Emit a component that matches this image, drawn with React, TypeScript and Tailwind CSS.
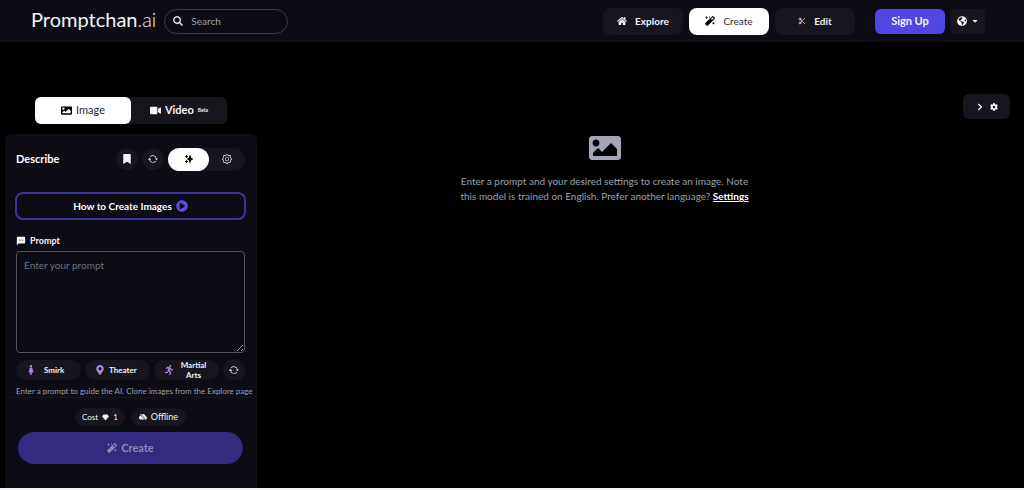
import { useState } from 'react';
import {
  FaHome,
  FaMagic,
  FaSearch,
  FaImage,
  FaVideo,
  FaBookmark,
  FaPlayCircle,
  FaMapMarkerAlt,
  FaRunning,
  FaFemale,
  FaGlobeAmericas,
  FaCaretDown,
  FaChevronRight,
  FaCog,
} from 'react-icons/fa';
import { BsGear, BsArrowRepeat, BsCloudSlashFill } from 'react-icons/bs';
import { FiScissors } from 'react-icons/fi';
import { HiSparkles } from 'react-icons/hi';
import { MdSms } from 'react-icons/md';

const navItem = 'flex h-[27px] w-20 items-center justify-center gap-2 rounded-lg text-[10px]';
const chip = 'flex h-5 w-[65px] items-center rounded-full bg-[#17161f] text-[8px] leading-[10px] font-bold text-gray-100';

function Gem() {
  return (
    <svg viewBox="0 0 14 14" className="size-[7px]" fill="currentColor" aria-hidden="true">
      <path d="M3 1h8l3 4-7 8-7-8z" />
    </svg>
  );
}

function Header() {
  return (
    <header className="flex h-[42px] items-center justify-between bg-[#0d0c14] pr-[39px] pl-[31px]">
      <div className="flex items-center gap-2">
        <a href="#" className="pb-1 text-[20px] leading-6 text-gray-100">
          Promptchan<span className="font-light">.ai</span>
        </a>
        <label className="flex h-[25px] w-[124px] items-center gap-2 rounded-full border border-[#3c3b46] px-2">
          <FaSearch className="size-[10px] shrink-0 text-gray-300" />
          <input
            type="search"
            aria-label="Search"
            placeholder="Search"
            className="w-full min-w-0 bg-transparent text-[10px] text-gray-200 outline-none placeholder:text-gray-400"
          />
        </label>
      </div>
      <div className="flex items-center gap-5">
        <nav className="flex items-center gap-[6px]">
          <a href="#explore" className={`${navItem} bg-[#17161f] font-bold text-gray-100`}>
            <FaHome /> Explore
          </a>
          <a href="#create" className={`${navItem} bg-white text-gray-800`}>
            <FaMagic className="text-black" /> Create
          </a>
          <a href="#edit" className={`${navItem} bg-[#17161f] font-bold text-gray-100`}>
            <FiScissors className="size-2" /> Edit
          </a>
        </nav>
        <div className="flex items-center gap-[5px]">
          <button className="h-[25px] w-[70px] rounded-md bg-[#4f46e5] text-[11px] font-bold text-gray-100">
            Sign Up
          </button>
          <button aria-label="Language" className="flex h-[25px] w-[35px] items-center justify-center gap-1 rounded-sm bg-[#17161f] text-white">
            <FaGlobeAmericas className="size-[10px]" />
            <FaCaretDown className="size-2" />
          </button>
        </div>
      </div>
    </header>
  );
}

function Sidebar() {
  const [prompt, setPrompt] = useState<string>('');

  return (
    <aside className="flex w-[252px] shrink-0 flex-col">
      {/* Image / video switch */}
      <div className="mx-[30px] flex h-[27px] rounded-md bg-[#17161f] text-[11px]">
        <button className="flex flex-1 items-center justify-center gap-1 rounded-md bg-white text-gray-800">
          <FaImage className="text-black" /> Image
        </button>
        <button className="flex flex-1 items-center justify-center gap-1 font-bold text-gray-100">
          <FaVideo /> Video <span className="text-[5px] font-bold">Beta</span>
        </button>
      </div>

      <section className="mt-[10px] flex flex-1 flex-col rounded-t-md bg-[#0d0c14]">
        <div className="flex flex-col pr-3 pl-[11px]">
          <div className="mt-[13px] flex h-6 items-center justify-between">
            <h2 className="text-[11px] font-bold text-white">Describe</h2>
            <div className="flex items-center gap-1 text-gray-100">
              <button aria-label="Saved" className="flex size-[22px] items-center justify-center rounded-full bg-[#17161f]">
                <FaBookmark className="size-[10px]" />
              </button>
              <button aria-label="Reset" className="flex size-[22px] items-center justify-center rounded-full bg-[#17161f]">
                <BsArrowRepeat className="size-[10px]" />
              </button>
              <div className="flex h-[23px] w-[77px] rounded-full bg-[#17161f]">
                <button aria-label="Simple" className="flex w-[41px] items-center justify-center rounded-full bg-white text-black">
                  <HiSparkles className="size-[10px]" />
                </button>
                <button aria-label="Advanced" className="flex flex-1 items-center justify-center">
                  <BsGear className="size-[10px]" />
                </button>
              </div>
            </div>
          </div>

          <button className="-mx-px mt-[21px] flex h-7 items-center justify-center gap-1 rounded-lg border-2 border-[#3d349c] text-[10px] font-bold text-white">
            How to Create Images <FaPlayCircle className="size-3 text-[#5b4be0]" />
          </button>

          <label htmlFor="prompt" className="mt-[13px] flex items-center gap-1 text-[9px] leading-4 font-bold text-gray-100">
            <MdSms className="size-[10px]" /> Prompt
          </label>
          <textarea
            id="prompt"
            value={prompt}
            onChange={(e) => setPrompt(e.target.value)}
            placeholder="Enter your prompt"
            className="mt-[2px] h-[102px] rounded-sm border border-[#55545f] bg-transparent px-[7px] py-[6px] text-[10px] text-gray-200 outline-none placeholder:text-gray-500"
          />

          <div className="mt-[6px] flex items-center justify-between">
            <button className={`${chip} gap-2 pl-[10px]`}>
              <FaFemale className="size-[10px] text-[#b184dd]" /> Smirk
            </button>
            <button className={`${chip} gap-1 pl-[10px]`}>
              <FaMapMarkerAlt className="size-[10px] text-[#b184dd]" /> Theater
            </button>
            <button className={`${chip} gap-1 px-[10px]`}>
              <FaRunning className="size-[10px] shrink-0 text-[#b184dd]" />
              <span className="w-8">Martial Arts</span>
            </button>
            <button aria-label="Refresh suggestions" className="flex size-[22px] items-center justify-center rounded-full bg-[#17161f] text-white">
              <BsArrowRepeat className="size-[10px]" />
            </button>
          </div>
          <p className="mt-1 text-[8px] leading-3 whitespace-nowrap text-gray-400">
            Enter a prompt to guide the AI. Clone images from the Explore page
          </p>
        </div>

        <div className="flex flex-col border-t border-[#15141d] pt-[10px] pr-[14px] pb-4 pl-[13px]">
          <div className="flex justify-center gap-[6px] text-gray-100">
            <span className="flex h-[18px] items-center gap-1 rounded-full bg-[#17161f] px-[7px] text-[8px]">
              Cost <Gem /> 1
            </span>
            <span className="flex h-[18px] items-center gap-1 rounded-full bg-[#17161f] px-2 text-[9px]">
              <BsCloudSlashFill className="size-2" /> Offline
            </span>
          </div>
          <button className="mt-[6px] flex h-8 items-center justify-center gap-1 rounded-full bg-[#322b80] text-[11px] font-bold text-[#8d89b5]">
            <FaMagic className="size-[10px]" /> Create
          </button>
        </div>
      </section>
    </aside>
  );
}

export default function App() {
  return (
    <div className="flex min-h-screen flex-col border-b-2 border-gray-100 bg-black font-[Lato,sans-serif]">
      <Header />
      <div className="flex flex-1 pt-[55px] pr-[14px] pl-[5px]">
        <Sidebar />
        <main className="flex flex-1 flex-col items-center pt-[35px] pr-[11px]">
          <FaImage className="size-8 text-[#a4a6b8]" />
          <p className="mt-[10px] w-[300px] text-center text-[10px] leading-[15px] text-gray-400">
            Enter a prompt and your desired settings to create an image. Note this model is trained on English. Prefer another language?{' '}
            <a href="#settings" className="font-bold text-white underline">Settings</a>
          </p>
        </main>
        <button aria-label="Open settings" className="-mt-[3px] flex h-[25px] w-[47px] items-center justify-center gap-[6px] rounded-md bg-[#17161f] text-white">
          <FaChevronRight className="size-2" />
          <FaCog className="size-2" />
        </button>
      </div>
    </div>
  );
}
